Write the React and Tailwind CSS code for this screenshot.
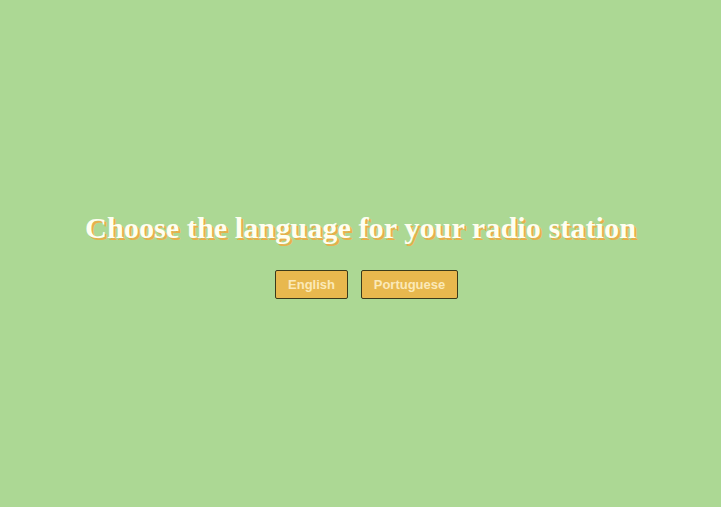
export default function App() {
  return (
    <div className="min-h-screen w-full bg-[#acd894] flex flex-col items-center justify-center pb-[2px]">
      <h1
        className="text-[30.3px] font-bold text-[#fffef0] [text-shadow:2px_2px_0_#e8b04a] m-0"
        style={{ fontFamily: '"Liberation Serif", "Times New Roman", serif' }}
      >
        Choose the language for your radio station
      </h1>
      <div className="flex gap-[13px] mt-[19px] ml-3" style={{ fontFamily: '"Liberation Sans", Arial, sans-serif' }}>
        <button className="h-[29px] w-[73px] bg-[#e8b84e] border border-[#3a3a1a] rounded-[2px] text-[13px] font-bold text-[#fbe9b8]">
          English
        </button>
        <button className="h-[29px] w-[97px] bg-[#e8b84e] border border-[#3a3a1a] rounded-[2px] text-[13px] font-bold text-[#fbe9b8]">
          Portuguese
        </button>
      </div>
    </div>
  );
}
